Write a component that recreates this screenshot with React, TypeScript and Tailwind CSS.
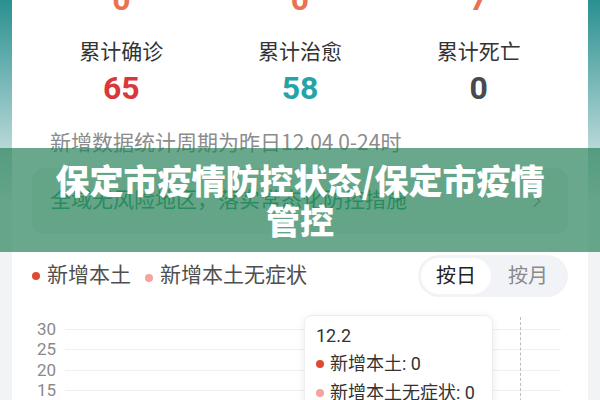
import { ChevronRight } from 'lucide-react';

const FONT = "font-['Roboto','Noto_Sans_CJK_SC',sans-serif]";

const topNumbers = ['0', '0', '7'];

const totals = [
  { label: '累计确诊', value: '65', color: 'text-[#d8383b]' },
  { label: '累计治愈', value: '58', color: 'text-[#27a3a7]' },
  { label: '累计死亡', value: '0', color: 'text-[#474a4f]' },
];

const yTicks = ['30', '25', '20', '15', '10', '5'];

function Dot({ color }: { color: string }) {
  return <span className={`inline-block w-[8px] h-[8px] rounded-full ${color}`} />;
}

export default function App() {
  return (
    <div
      className={`relative w-[600px] h-[400px] overflow-hidden bg-[linear-gradient(180deg,#2a9090_0px,#b9d8d8_150px,#f2f3f5_200px)] ${FONT}`}
    >
      <div className="mx-3 bg-white px-5">
        {/* Yesterday's new cases (scrolled mostly off screen) */}
        <div className="grid grid-cols-3 mt-[-17px] text-center text-[32px] font-bold leading-none text-[#ec7150]">
          {topNumbers.map((n, i) => (
            <div key={i}>{n}</div>
          ))}
        </div>

        {/* Totals */}
        <div className="grid grid-cols-3 mt-[23px] text-center">
          {totals.map((t) => (
            <div key={t.label} className="flex flex-col items-center">
              <div className="text-[21px] leading-[28px] text-[#333]">{t.label}</div>
              <div className={`mt-[6px] text-[32px] font-bold leading-none ${t.color}`}>{t.value}</div>
            </div>
          ))}
        </div>

        <p className="mt-[23px] pl-[18px] text-[21px] leading-[28px] text-[#8c8c8c] font-['Noto_Sans_CJK_SC',sans-serif]">
          新增数据统计周期为昨日12.04 0-24时
        </p>

        {/* Risk status */}
        <div className="mt-[13px] h-[66px] rounded-xl bg-[#eef6f1] flex items-center justify-between pl-[18px] pr-[20px]">
          <span className="text-[21px] text-[#2e9b6e]">全域无风险地区，落实常态化防控措施</span>
          <ChevronRight size={22} strokeWidth={1.5} className="text-[#9a9a9a]" />
        </div>

        {/* Chart header */}
        <div className="mt-[21px] flex items-center justify-between">
          <div className="flex items-center text-[21px] text-[#4f4f4f]">
            <Dot color="bg-[#e04a30]" />
            <span className="ml-[7px]">新增本土</span>
            <span className="ml-[14px]">
              <Dot color="bg-[#f5a39b]" />
            </span>
            <span className="ml-[7px]">新增本土无症状</span>
          </div>
          <div className="flex items-center rounded-full bg-[#f2f3f7] p-[3px] text-[20px]">
            <div className="h-[36px] px-[15px] flex items-center rounded-full bg-white text-[#222]">按日</div>
            <div className="h-[36px] px-[17px] flex items-center text-[#8a8a8a]">按月</div>
          </div>
        </div>

        {/* Chart */}
        <div className="relative mt-[22px] pb-[20px]">
          {yTicks.map((t) => (
            <div key={t} className="flex items-center h-[20.5px]">
              <span className="w-[24px] text-right text-[17px] leading-none text-[#8a8a8a]">{t}</span>
              <div className="ml-[9px] mr-[7px] flex-1 h-px bg-[#f0f0f0]" />
            </div>
          ))}

          <div className="absolute left-[488px] top-[-2px] bottom-0 border-l border-dashed border-[#bdbdbd]" />

          <div className="absolute left-[272px] top-[-4px] w-[189px] h-[120px] rounded-lg bg-white border border-[#eeeeee] shadow-[0_2px_10px_rgba(0,0,0,0.08)] px-[11px] pt-[8px] text-[18px] text-[#333]">
            <div className="leading-[24px]">12.2</div>
            <div className="mt-[3px] flex items-center leading-[26px]">
              <Dot color="bg-[#e04a30]" />
              <span className="ml-[6px]">新增本土: 0</span>
            </div>
            <div className="mt-[3px] flex items-center leading-[26px]">
              <Dot color="bg-[#f5a39b]" />
              <span className="ml-[6px]">新增本土无症状: 0</span>
            </div>
          </div>
        </div>
      </div>

      {/* Title banner */}
      <div className="absolute left-0 right-0 top-[148px] h-[104px] bg-[rgba(42,131,91,0.7)] flex items-center justify-center px-[24px]">
        <h1 className="max-w-[500px] text-center text-[34px] leading-[40px] font-black text-white font-['Noto_Sans_CJK_SC',sans-serif]">
          保定市疫情防控状态/保定市疫情管控
        </h1>
      </div>
    </div>
  );
}
